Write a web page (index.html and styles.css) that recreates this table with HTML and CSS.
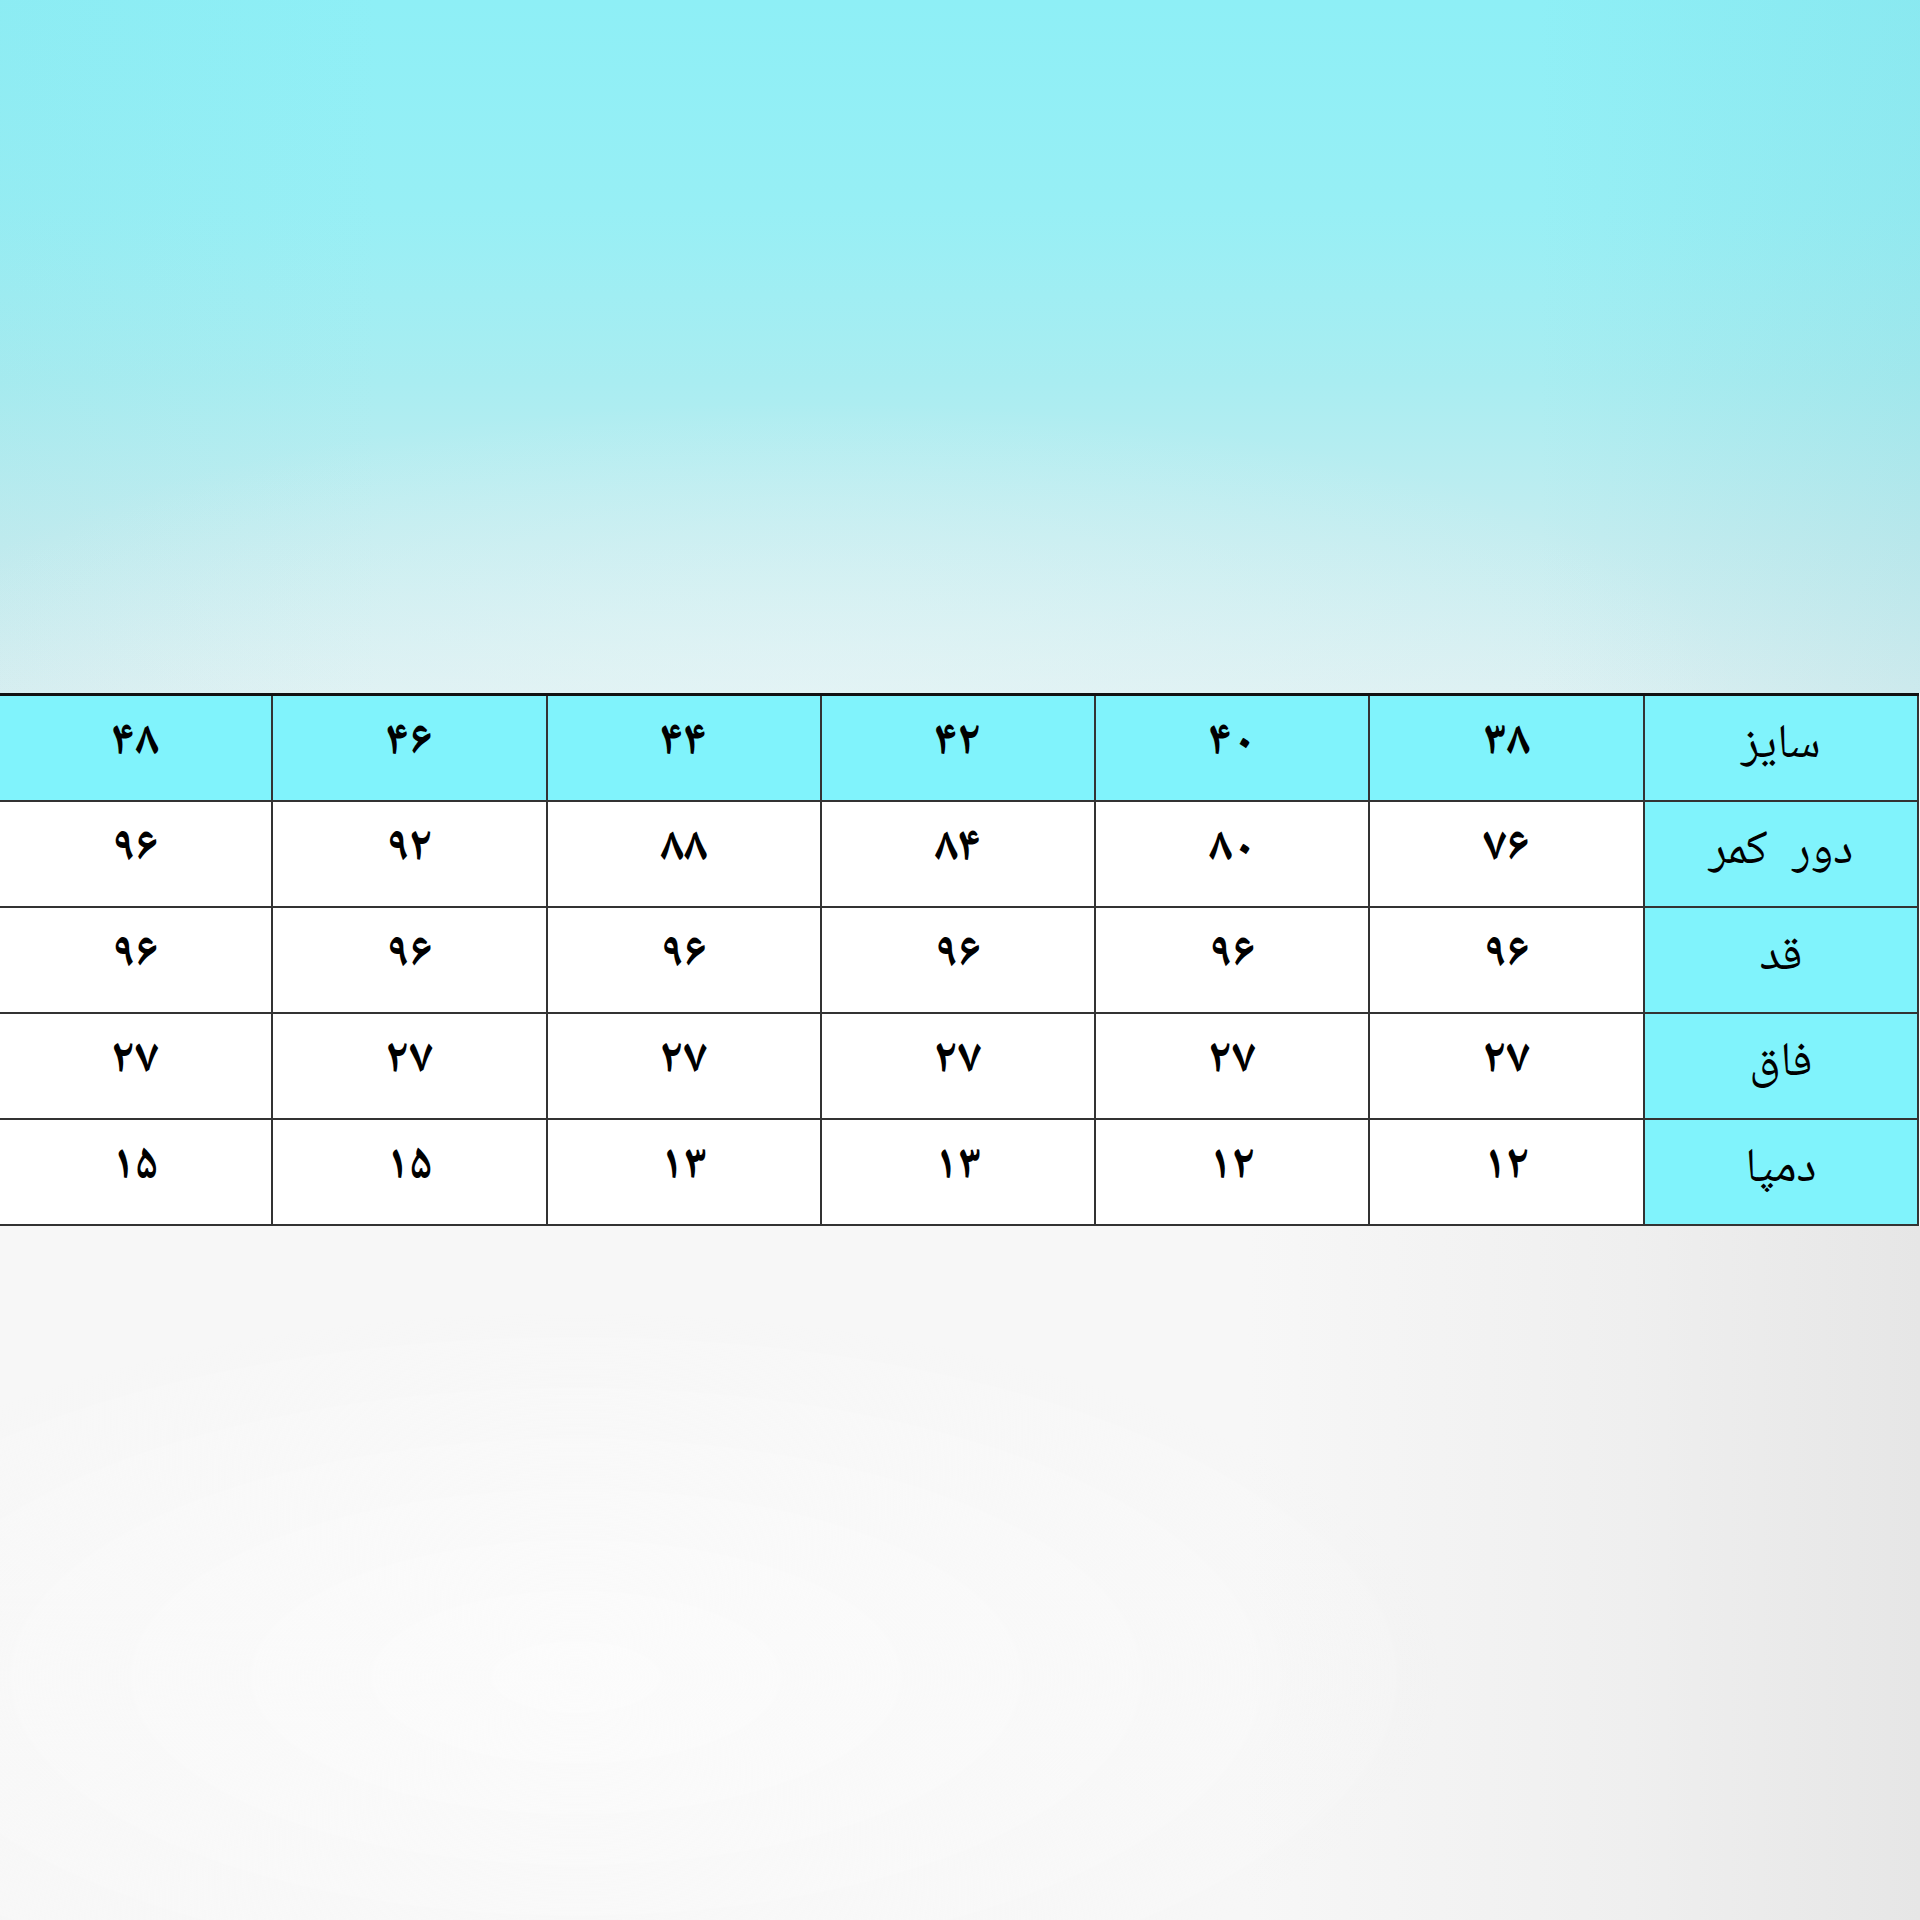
FILE: index.html
```html
<!DOCTYPE html>
<html lang="fa">
<head>
<meta charset="utf-8">
<title>جدول سایز</title>
<link rel="stylesheet" href="styles.css">
</head>
<body>
<div class="page">
  <div class="sky"></div>
  <table class="sizes" dir="rtl">
    <tr class="head">
      <th class="label">سایز</th>
      <td>۳۸</td><td>۴۰</td><td>۴۲</td><td>۴۴</td><td>۴۶</td><td>۴۸</td>
    </tr>
    <tr>
      <th class="label">دور کمر</th>
      <td>۷۶</td><td>۸۰</td><td>۸۴</td><td>۸۸</td><td>۹۲</td><td>۹۶</td>
    </tr>
    <tr>
      <th class="label">قد</th>
      <td>۹۶</td><td>۹۶</td><td>۹۶</td><td>۹۶</td><td>۹۶</td><td>۹۶</td>
    </tr>
    <tr>
      <th class="label">فاق</th>
      <td>۲۷</td><td>۲۷</td><td>۲۷</td><td>۲۷</td><td>۲۷</td><td>۲۷</td>
    </tr>
    <tr>
      <th class="label">دمپا</th>
      <td>۱۲</td><td>۱۲</td><td>۱۳</td><td>۱۳</td><td>۱۵</td><td>۱۵</td>
    </tr>
  </table>
  <div class="floor"></div>
</div>
</body>
</html>
```

FILE: styles.css
```css
html, body {
  margin: 0;
  padding: 0;
}
body {
  width: 1920px;
  height: 1920px;
  overflow: hidden;
  background: #f8f8f8;
}
.page {
  display: flex;
  flex-direction: column;
  width: 1920px;
  height: 1920px;
}
.sky {
  height: 693px;
  flex: none;
  background:
    radial-gradient(ellipse 70% 60% at 42% 100%, rgba(232, 246, 247, 0.55), rgba(232, 246, 247, 0) 70%),
    linear-gradient(to right, rgba(120, 200, 210, 0.08) 0%, rgba(0,0,0,0) 20%, rgba(0,0,0,0) 80%, rgba(110, 195, 205, 0.14) 100%),
    linear-gradient(to bottom, #8eeff6 0%, #97eff5 30%, #a9edf1 55%, #c4edf0 78%, #dcf0f2 100%);
}
.sizes {
  flex: none;
  width: 1922px;
  margin-left: -3px;
  table-layout: fixed;
  border-collapse: collapse;
  border-top: 3px solid #111;
  font-family: "Noto Naskh Arabic", "Noto Sans Arabic", "DejaVu Sans", serif;
  color: #000;
}
.sizes td,
.sizes th {
  height: 106px;
  border: 2px solid #333;
  background: #ffffff;
  text-align: center;
  vertical-align: middle;
  padding: 0 0 8px 0;
  font-size: 48px;
  font-weight: normal;
  line-height: 1;
  box-sizing: border-box;
}
.sizes .head td,
.sizes th.label {
  background: #80f3fc;
}
.sizes td {
  font-weight: bold;
}
.sizes th.label {
  font-size: 48px;
  word-spacing: 14px;
  padding-bottom: 2px;
}
.floor {
  flex: 1;
  background:
    radial-gradient(ellipse 60% 70% at 30% 65%, rgba(252, 252, 252, 0.9), rgba(252, 252, 252, 0) 75%),
    linear-gradient(to right, #f7f7f7 0%, #f7f7f7 65%, #efefef 85%, #e6e6e6 100%);
}
```
